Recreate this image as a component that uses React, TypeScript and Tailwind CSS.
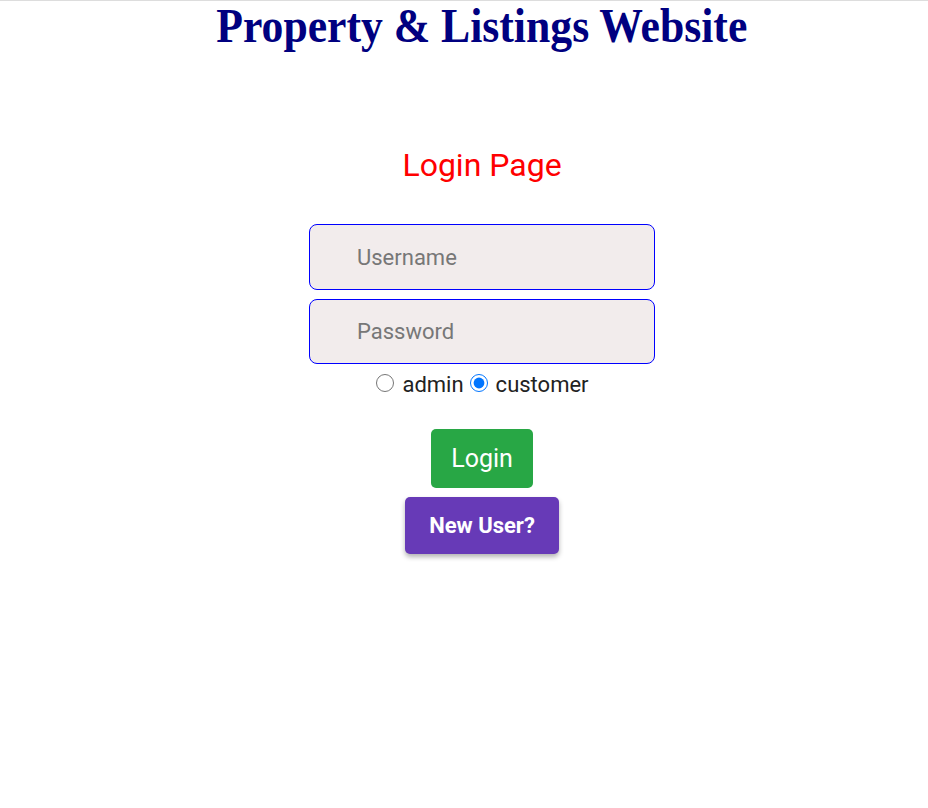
import React from 'react';

const App: React.FC = () => {
  return (
    <div className="min-h-[808px] bg-white border-t border-[#dddddd] font-['Roboto',sans-serif] pl-[36px]">
      {/* 제목 */}
      <h1 className="text-center font-['Liberation_Serif',serif] font-bold text-[48px] leading-[52px] text-[#000080] mt-[-1px]">
        <span className="inline-block scale-x-[0.91]">Property &amp; Listings Website</span>
      </h1>

      <div className="flex flex-col items-center">
        <h2 className="mt-[95px] text-[32px] leading-[36px] text-[#ff0000]">Login Page</h2>

        <form className="mt-[41px] flex flex-col items-center" onSubmit={(e) => e.preventDefault()}>
          <input
            type="text"
            placeholder="Username"
            className="w-[346px] h-[66px] rounded-[8px] border border-[#0000ff] bg-[#f2ecec] pl-[47px] text-[22px] text-[#333] placeholder:text-[#777] outline-none"
          />
          <input
            type="password"
            placeholder="Password"
            className="mt-[9px] w-[346px] h-[65px] rounded-[8px] border border-[#0000ff] bg-[#f2ecec] pl-[47px] text-[22px] text-[#333] placeholder:text-[#777] outline-none"
          />

          <div className="mt-[8px] flex items-center text-[22px] leading-[26px] text-[#222]">
            <input type="radio" name="role" className="w-[18px] h-[18px] ml-[1px] mr-[8px] mb-[4px]" />
            <span>admin</span>
            <input type="radio" name="role" defaultChecked className="w-[18px] h-[18px] ml-[6px] mr-[8px] mb-[4px] accent-[#0075ff]" />
            <span>customer</span>
          </div>

          <button
            type="submit"
            className="mt-[31px] w-[102px] h-[59px] rounded-[5px] bg-[#28a745] text-white text-[25px]"
          >
            Login
          </button>
          <button
            type="button"
            className="mt-[9px] w-[154px] h-[57px] rounded-[5px] bg-[#673ab7] text-white text-[22px] font-bold shadow-[0_3px_5px_rgba(0,0,0,0.3)]"
          >
            New User?
          </button>
        </form>
      </div>
    </div>
  );
};

export default App;
